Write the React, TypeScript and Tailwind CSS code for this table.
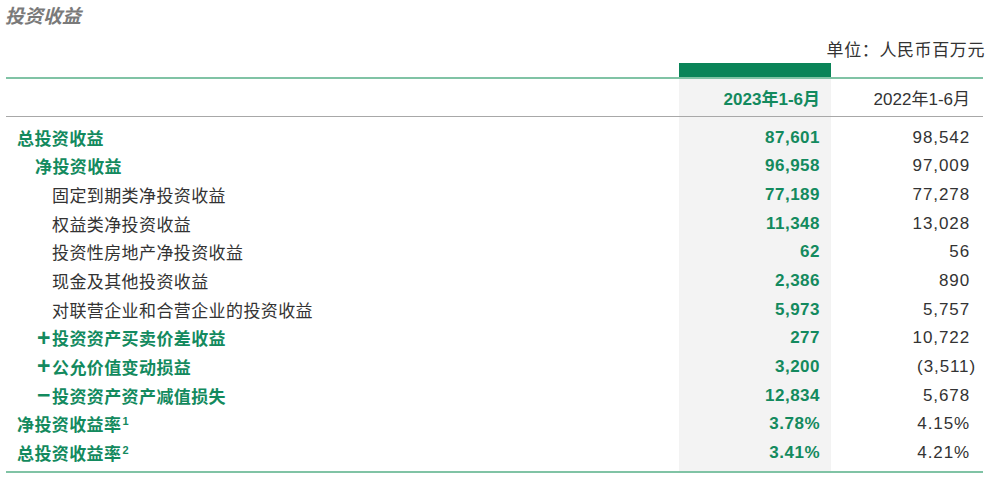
import React from "react";

interface Row {
  label: string;
  prefix?: string;
  sup?: string;
  level: 0 | 1 | 2;
  bold: boolean;
  cur: string;
  prev: string;
}

const rows: Row[] = [
  { label: "总投资收益", level: 0, bold: true, cur: "87,601", prev: "98,542" },
  { label: "净投资收益", level: 1, bold: true, cur: "96,958", prev: "97,009" },
  { label: "固定到期类净投资收益", level: 2, bold: false, cur: "77,189", prev: "77,278" },
  { label: "权益类净投资收益", level: 2, bold: false, cur: "11,348", prev: "13,028" },
  { label: "投资性房地产净投资收益", level: 2, bold: false, cur: "62", prev: "56" },
  { label: "现金及其他投资收益", level: 2, bold: false, cur: "2,386", prev: "890" },
  { label: "对联营企业和合营企业的投资收益", level: 2, bold: false, cur: "5,973", prev: "5,757" },
  { label: "投资资产买卖价差收益", prefix: "+", level: 1, bold: true, cur: "277", prev: "10,722" },
  { label: "公允价值变动损益", prefix: "+", level: 1, bold: true, cur: "3,200", prev: "(3,511)" },
  { label: "投资资产资产减值损失", prefix: "−", level: 1, bold: true, cur: "12,834", prev: "5,678" },
  { label: "净投资收益率", sup: "1", level: 0, bold: true, cur: "3.78%", prev: "4.15%" },
  { label: "总投资收益率", sup: "2", level: 0, bold: true, cur: "3.41%", prev: "4.21%" },
];

const cjk = "font-['Noto_Sans_CJK_SC',sans-serif]";
const num = "font-['Liberation_Sans','Noto_Sans_CJK_SC',sans-serif]";

const indent = (r: Row) => {
  if (r.prefix) return "pl-[31px]";
  if (r.level === 0) return "pl-[11px]";
  if (r.level === 1) return "pl-[29px]";
  return "pl-[46px]";
};

const App: React.FC = () => {
  return (
    <div className="w-[999px] h-[485px] bg-white overflow-hidden">
      {/* Title */}
      <div className={`pl-[5px] pt-[3px] leading-[24px] text-[19px] italic font-bold text-[#7a7a7a] ${cjk}`}>
        投资收益
      </div>

      {/* Unit */}
      <div className={`mt-[12px] flex justify-end pr-[14px] leading-[20px] text-[17px] tracking-[0.6px] text-[#333] ${cjk}`}>
        单位：人民币百万元
      </div>

      <div className="ml-[6px] w-[977px]">
        {/* green tab */}
        <div className="mt-[4px] grid grid-cols-[1fr_152px_152px]">
          <div />
          <div className="h-[14px] bg-[#0a8458]" />
          <div />
        </div>

        <div className="border-t-2 border-b-2 border-[#80c3a5]">
          {/* Header */}
          <div className="grid grid-cols-[1fr_152px_152px] h-[38px] border-b border-[#a8a8a8]">
            <div />
            <div className={`bg-[#f3f3f3] flex items-center justify-end pt-[4px] pr-[11px] text-[17px] font-bold text-[#138a5e] ${num}`}>
              2023年1-6月
            </div>
            <div className={`flex items-center justify-end pt-[4px] pr-[13px] text-[17px] text-[#333] ${num}`}>
              2022年1-6月
            </div>
          </div>

          {/* Body */}
          <div className="grid grid-cols-[1fr_152px_152px]">
            <div className="h-[6px]" />
            <div className="h-[6px] bg-[#f3f3f3]" />
            <div className="h-[6px]" />
            {rows.map((r, i) => (
              <React.Fragment key={i}>
                <div
                  className={`h-[28.7px] flex items-center text-[17px] tracking-[0.4px] ${indent(r)} ${cjk} ${
                    r.bold ? "font-bold text-[#138a5e]" : "text-[#333]"
                  }`}
                >
                  {r.prefix && (
                    <span className={`inline-block w-[15px] text-[23px] leading-none font-bold ${num}`}>{r.prefix}</span>
                  )}
                  <span>{r.label}</span>
                  {r.sup && (
                    <span className={`self-start mt-[6px] ml-[1px] text-[11px] font-bold leading-none ${num}`}>{r.sup}</span>
                  )}
                </div>
                <div
                  className={`h-[28.7px] bg-[#f3f3f3] flex items-center justify-end pr-[11px] text-[17px] tracking-[0.5px] font-bold text-[#138a5e] ${num}`}
                >
                  {r.cur}
                </div>
                <div
                  className={`h-[28.7px] flex items-center justify-end pr-[13px] text-[17px] tracking-[0.9px] text-[#333] ${num}`}
                >
                  {r.prev.startsWith("(") ? (
                    <span className="-mr-[6px]">{r.prev}</span>
                  ) : (
                    r.prev
                  )}
                </div>
              </React.Fragment>
            ))}
            <div className="h-[4px]" />
            <div className="h-[4px] bg-[#f3f3f3]" />
            <div className="h-[4px]" />
          </div>
        </div>
      </div>
    </div>
  );
};

export default App;
